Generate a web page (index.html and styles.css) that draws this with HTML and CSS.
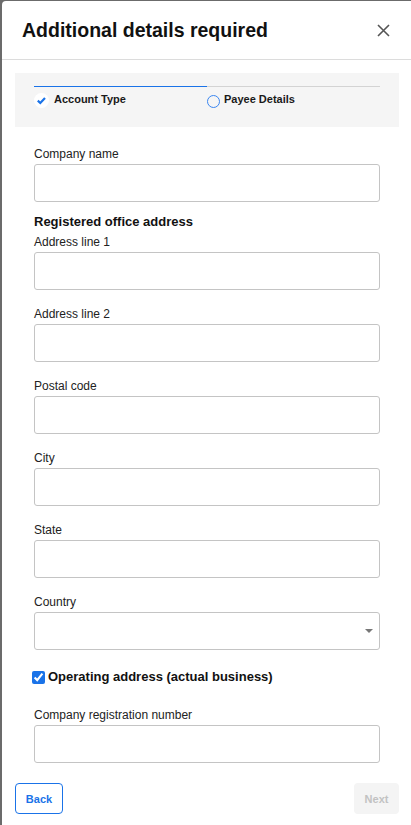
FILE: index.html
```html
<!DOCTYPE html>
<html lang="en">
<head>
  <meta charset="UTF-8">
  <meta name="viewport" content="width=device-width, initial-scale=1.0">
  <title>Additional details required</title>
  <link rel="stylesheet" href="styles.css">
</head>
<body>
  <div class="modal">
    <header class="modal-header">
      <h2>Additional details required</h2>
      <button class="close" aria-label="Close">
        <svg width="13" height="13" viewBox="0 0 13 13"><path d="M1 1 L12 12 M12 1 L1 12" stroke="#555" stroke-width="1.6" fill="none"/></svg>
      </button>
    </header>

    <div class="modal-body">
      <div class="stepper">
        <div class="step done">
          <span class="step-icon">
            <svg width="15" height="15" viewBox="0 0 15 15"><circle cx="7.5" cy="7.5" r="7.5" fill="#fff"/><path d="M3.8 7.6 L6.3 10 L11 5" stroke="#1a73e8" stroke-width="2.2" fill="none"/></svg>
          </span>
          Account Type
        </div>
        <div class="step">
          <span class="step-circle"></span>
          Payee Details
        </div>
      </div>

      <form class="form">
        <div class="field first">
          <label>Company name</label>
          <input type="text">
        </div>

        <h3 class="section-title">Registered office address</h3>
        <div class="field">
          <label>Address line 1</label>
          <input type="text">
        </div>
        <div class="field">
          <label>Address line 2</label>
          <input type="text">
        </div>
        <div class="field">
          <label>Postal code</label>
          <input type="text">
        </div>
        <div class="field">
          <label>City</label>
          <input type="text">
        </div>
        <div class="field">
          <label>State</label>
          <input type="text">
        </div>
        <div class="field">
          <label>Country</label>
          <div class="select-wrap">
            <select><option></option></select>
          </div>
        </div>

        <label class="check-row">
          <input type="checkbox" checked>
          <span>Operating address (actual business)</span>
        </label>

        <div class="field last">
          <label>Company registration number</label>
          <input type="text">
        </div>
      </form>
    </div>

    <footer class="modal-footer">
      <button class="btn btn-back">Back</button>
      <button class="btn btn-next" disabled>Next</button>
    </footer>
  </div>
</body>
</html>
```

FILE: styles.css
```css
body {
  margin: 0;
  background: #6b6b6b;
  font-family: 'Liberation Sans', Arial, sans-serif;
  color: #222;
}

.modal {
  margin: 1px 0 0 2px;
  min-height: 824px;
  background: #fff;
  border-top-left-radius: 4px;
}

.modal-header {
  display: flex;
  justify-content: space-between;
  align-items: center;
  height: 58px;
  padding: 0 20px 0 20px;
  border-bottom: 1px solid #dcdcdc;
}

.modal-header h2 {
  margin: 0;
  font-size: 19.5px;
  font-weight: bold;
  color: #111;
}

.close {
  border: none;
  background: none;
  padding: 0;
  margin-right: 1px;
  display: flex;
}

.modal-body {
  padding: 13px 12px 0 13px;
}

/* Stepper */
.stepper {
  display: flex;
  background: #f5f5f5;
  padding: 13px 19px 19px;
}

.step {
  flex: 1;
  display: flex;
  align-items: flex-start;
  border-top: 1px solid #d3d3d3;
  padding-top: 4px;
  font-size: 11px;
  line-height: 16px;
  font-weight: bold;
  color: #1a1a1a;
}

.step.done {
  border-top-color: #1a73e8;
}

.step-icon {
  display: flex;
  margin-right: 5px;
  margin-top: 2px;
}

.step-circle {
  box-sizing: border-box;
  width: 13px;
  height: 13px;
  border: 1.5px solid #3b86f0;
  border-radius: 50%;
  margin-right: 4px;
  margin-top: 3.5px;
}

/* Form */
.form {
  padding: 20px 19px 0;
}

.field {
  margin-bottom: 17px;
}

.field.first {
  margin-bottom: 12px;
}

.field.last {
  margin-bottom: 0;
}

.field label {
  display: block;
  font-size: 12px;
  line-height: 14px;
  margin-bottom: 3px;
  color: #222;
}

.field input,
.field select {
  display: block;
  box-sizing: border-box;
  width: 100%;
  height: 38px;
  margin: 0;
  border: 1px solid #c4c4c4;
  border-radius: 3px;
  background: #fff;
  font: inherit;
}

.field select {
  appearance: none;
  -webkit-appearance: none;
}

.select-wrap {
  position: relative;
}

.select-wrap::after {
  content: "";
  position: absolute;
  right: 7px;
  top: 17px;
  border-left: 4px solid transparent;
  border-right: 4px solid transparent;
  border-top: 4px solid #777;
}

.section-title {
  margin: 0 0 5px;
  font-size: 13px;
  line-height: 16px;
  font-weight: bold;
  color: #111;
}

.check-row {
  display: flex;
  align-items: center;
  gap: 3px;
  padding-top: 2px;
  margin: 0 0 23px -2px;
  font-size: 13px;
  line-height: 16px;
  font-weight: bold;
  color: #111;
}

.check-row input {
  margin: 0;
  width: 13px;
  height: 13px;
  accent-color: #1a73e8;
}

/* Footer */
.modal-footer {
  display: flex;
  justify-content: space-between;
  padding: 20px 12px 0 13px;
}

.btn {
  height: 31px;
  border-radius: 4px;
  font-family: inherit;
  font-size: 11px;
  font-weight: bold;
  padding: 0;
}

.btn-back {
  width: 48px;
  border: 1px solid #1a73e8;
  background: #fff;
  color: #1a73e8;
}

.btn-next {
  width: 45px;
  border: none;
  background: #f4f4f4;
  color: #c2c2c2;
}
```
